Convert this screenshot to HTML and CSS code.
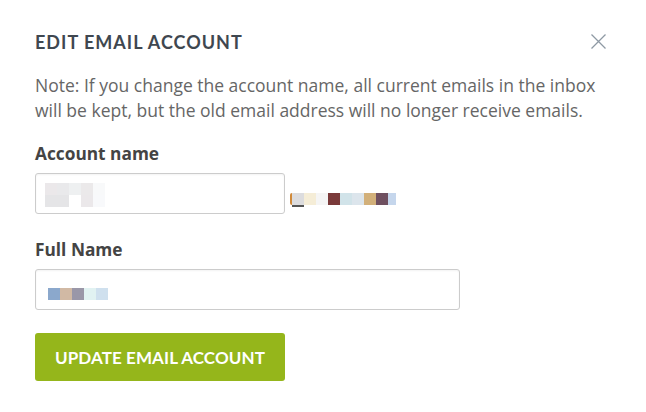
FILE: index.html
```html
<!DOCTYPE html>
<html>
<head>
<meta charset="utf-8">
<link rel="stylesheet" href="styles.css">
</head>
<body>
<div class="modal">
  <div class="header">
    <h2 class="title">EDIT EMAIL ACCOUNT</h2>
    <button class="close" aria-label="Close">
      <svg width="15" height="15" viewBox="0 0 15 15"><path d="M0.5 0.5L14.5 14.5M14.5 0.5L0.5 14.5" stroke="#8e99a4" stroke-width="1.3" fill="none"/></svg>
    </button>
  </div>
  <p class="note">Note: If you change the account name, all current emails in the inbox will be kept, but the old email address will no longer receive emails.</p>
  <label class="label">Account name</label>
  <div class="row">
    <div class="input short">
      <div class="pix">
        <div class="pixrow"><span style="background:#ebe8ea"></span><span style="background:#e9e9eb"></span><span style="background:#eef0f1"></span><span style="background:#ebe9ea"></span><span style="background:#f8f9fa"></span></div>
        <div class="pixrow"><span style="background:#e5e5e7"></span><span style="background:#e5e5e7"></span><span style="background:#ffffff"></span><span style="background:#ebe8ea"></span><span style="background:#f8f9fb"></span></div>
      </div>
    </div>
    <div class="domain">
      <span class="edge"></span>
      <span class="under" style="background:#dcdcde"></span><span style="background:#f5edd7"></span><span style="background:#f5f5f5"></span><span style="background:#7a3a3a"></span><span style="background:#d1e3e9"></span><span style="background:#dce5ec"></span><span style="background:#d2b07a"></span><span style="background:#6f5060"></span><span class="half" style="background:#c5d6ec"></span>
    </div>
  </div>
  <label class="label label2">Full Name</label>
  <div class="input long">
    <div class="pixrow single"><span style="background:#8ba8cc"></span><span style="background:#d1b9a4"></span><span style="background:#9a97a8"></span><span style="background:#e1f2f2"></span><span style="background:#cfe0ee"></span></div>
  </div>
  <button class="submit">UPDATE EMAIL ACCOUNT</button>
</div>
</body>
</html>
```
FILE: styles.css
```css
* { box-sizing: border-box; }
html, body { margin: 0; padding: 0; background: #fff; }
body { font-family: "Open Sans", sans-serif; color: #555; }
.modal { padding: 30px 35px 0 35px; width: 646px; }
.header { display: flex; justify-content: space-between; align-items: flex-start; }
.title { margin: 0; font-family: Lato, sans-serif; font-weight: 700; font-size: 18px; line-height: 24px; color: #3f4750; letter-spacing: 1px; }
.close { background: none; border: 0; padding: 0; margin: 4px 5px 0 0; width: 15px; height: 15px; display: block; }
.close svg { display: block; }
.note { margin: 19px 0 0 0; max-width: 566px; font-size: 17.5px; line-height: 25px; color: #666; }
.label { display: block; font-weight: 700; font-size: 17.3px; line-height: 22px; color: #444; margin-top: 20px; }
.label2 { margin-top: 25px; }
.row { display: flex; align-items: flex-start; margin-top: 8px; }
.input { border: 1px solid #ccc; border-radius: 3px; height: 41px; background: #fff; display: flex; align-items: center; box-shadow: inset 0 1px 2px rgba(0,0,0,0.05); }
.short { width: 250px; padding-left: 9px; }
.long { width: 425px; padding-left: 12px; margin-top: 8px; }
.pix { display: flex; flex-direction: column; margin-top: 2px; }
.pixrow { display: flex; }
.pixrow span { width: 12px; height: 12px; display: block; }
.pixrow.single { margin-top: 8px; }
.domain { display: flex; align-items: flex-start; margin-left: 5px; margin-top: 20px; }
.domain span { width: 12px; height: 12px; display: block; }
.domain .edge { width: 2px; background: #d08a3a; border-radius: 2px 0 0 2px; }
.domain .under { border-bottom: 2px solid #555; height: 14px; }
.domain .half { width: 8px; }
.submit { margin-top: 23px; width: 250px; height: 48px; border: 0; border-radius: 3px; background: #95b61b; color: #fff; font-family: Lato, sans-serif; font-weight: 700; font-size: 17px; letter-spacing: 0.1px; padding: 0; display: flex; align-items: center; justify-content: center; }
```
